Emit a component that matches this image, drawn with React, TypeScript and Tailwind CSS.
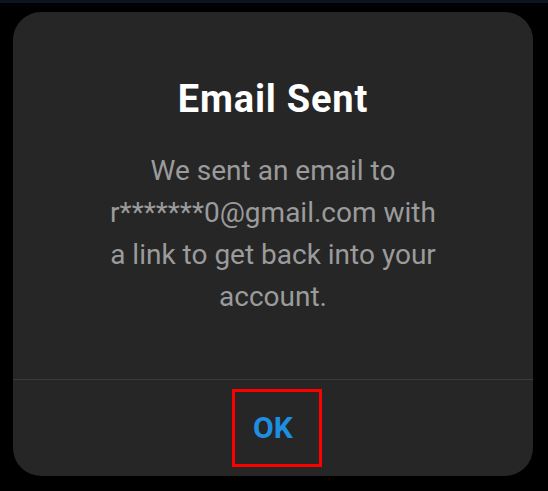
import React from "react";

export default function App() {
  return (
    <div
      className="w-[548px] h-[491px] bg-black overflow-hidden"
      style={{ fontFamily: "Roboto, 'Liberation Sans', sans-serif" }}
    >
      <div className="h-[3px] bg-[#0c1522]" />
      <div className="mt-[9px] ml-[13px] w-[520px] h-[464px] rounded-[28px] bg-[#262626] flex flex-col">
        <div className="pt-[64px] flex flex-col items-center">
          <h1 className="text-[38px] leading-[46px] font-bold tracking-[0.8px] text-white">Email Sent</h1>
          <p className="mt-[28px] text-[28px] leading-[42px] text-[#9b9b9b] text-center">
            We sent an email to
            <br />
            r*******0@gmail.com with
            <br />
            a link to get back into your
            <br />
            account.
          </p>
        </div>
        <div className="mt-auto border-t border-[#3a3a3a] h-[97px] relative flex items-center justify-center">
          <button className="text-[30px] font-bold text-[#1e8fe0] leading-none">OK</button>
          <div className="absolute left-[219px] top-[9px] w-[90px] h-[78px] border-[3px] border-[#ff0000]" />
        </div>
      </div>
    </div>
  );
}
